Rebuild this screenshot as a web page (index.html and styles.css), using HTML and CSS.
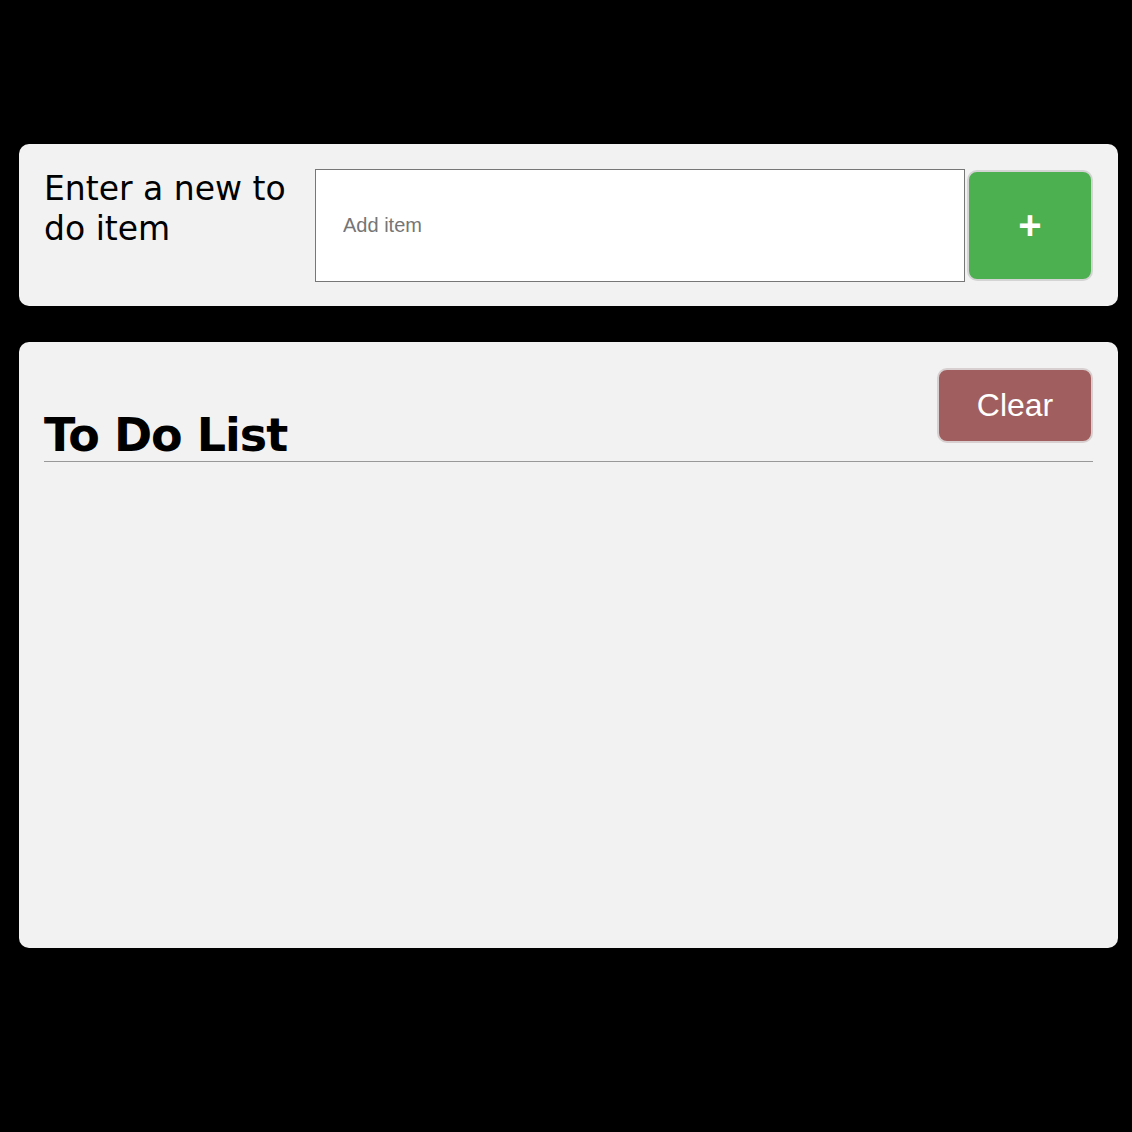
FILE: index.html
```html
<!DOCTYPE html>
<html>
<head>
<meta charset="utf-8">
<link rel="stylesheet" href="styles.css">
</head>
<body>
<div class="page">
  <section class="card entry">
    <label class="entry-label" for="item">Enter a new to do item</label>
    <input class="entry-input" id="item" type="text" placeholder="Add item">
    <button class="add-btn" type="button">+</button>
  </section>
  <section class="card list">
    <div class="list-head">
      <h1 class="list-title">To Do List</h1>
      <button class="clear-btn" type="button">Clear</button>
    </div>
    <div class="list-body"></div>
  </section>
</div>
</body>
</html>
```
FILE: styles.css
```css
html, body {
  margin: 0;
  padding: 0;
  background: #000;
}
.page {
  padding: 144px 14px 0 19px;
  display: flex;
  flex-direction: column;
  gap: 36px;
}
.card {
  background: #f2f2f2;
  border-radius: 10px;
  box-sizing: border-box;
}
.entry {
  height: 162px;
  padding: 25px 25px 0 25px;
  display: flex;
  align-items: flex-start;
}
.entry-label {
  width: 252px;
  margin-right: 19px;
  font-family: "DejaVu Sans", sans-serif;
  font-size: 33px;
  line-height: 40px;
  color: #000;
}
.entry-input {
  flex: 1;
  height: 113px;
  box-sizing: border-box;
  border: 1px solid #777;
  margin: 0;
  padding: 0 27px;
  font-family: "Liberation Sans", Arial, sans-serif;
  font-size: 20px;
  background: #fff;
  outline: none;
}
.entry-input::placeholder {
  color: #757575;
}
.add-btn {
  width: 126px;
  height: 111px;
  margin: 1px 0 0 2px;
  box-sizing: border-box;
  border: 2px solid #d4d4d4;
  border-radius: 10px;
  background: #4caf50;
  color: #fff;
  font-family: "Liberation Sans", Arial, sans-serif;
  font-weight: bold;
  font-size: 40px;
  padding: 0;
}
.list {
  height: 606px;
  padding: 25px 25px 0 25px;
}
.list-head {
  display: flex;
  justify-content: space-between;
  align-items: flex-start;
  border-bottom: 1px solid #999;
  height: 94px;
}
.list-title {
  margin: 0;
  padding-top: 48px;
  font-family: "DejaVu Sans", sans-serif;
  font-weight: bold;
  font-size: 46px;
  letter-spacing: -1px;
  line-height: 40px;
  color: #000;
}
.clear-btn {
  width: 156px;
  height: 75px;
  margin-top: 1px;
  box-sizing: border-box;
  border: 2px solid #d8d0d0;
  border-radius: 10px;
  background: #a05e5e;
  color: #fff;
  font-family: "Liberation Sans", Arial, sans-serif;
  font-size: 32px;
  padding: 0;
}
```
